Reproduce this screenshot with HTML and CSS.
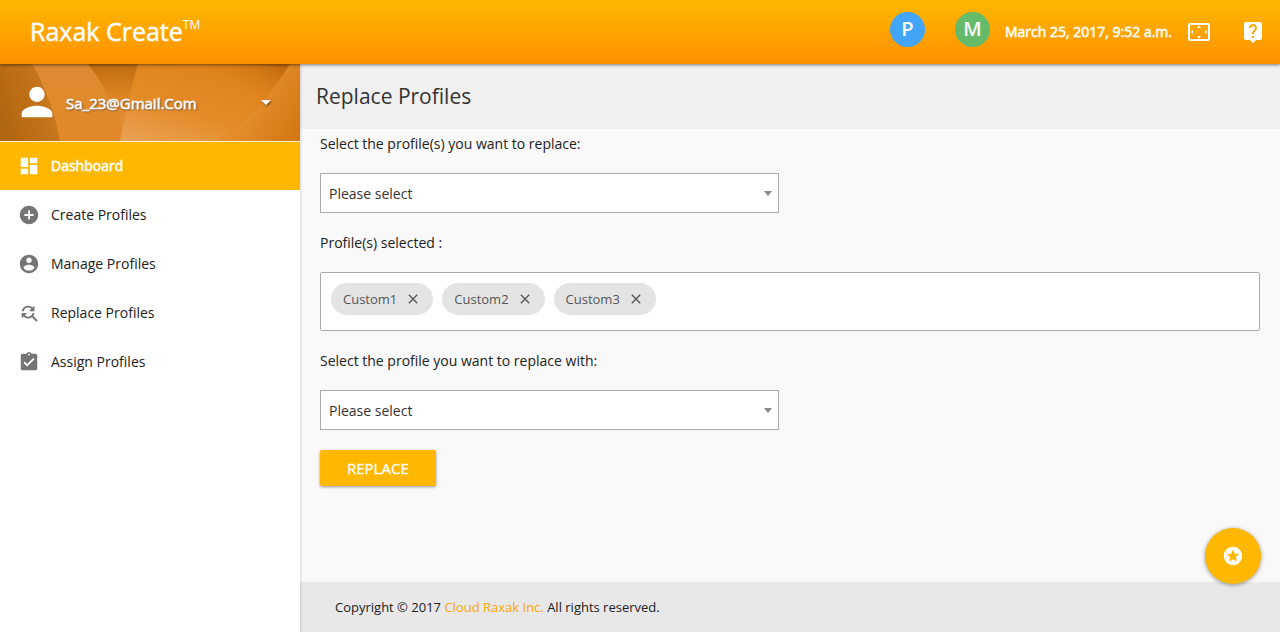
FILE: index.html
```html
<!DOCTYPE html>
<html lang="en">
<head>
<meta charset="utf-8">
<meta name="viewport" content="width=device-width, initial-scale=1">
<title>Raxak Create - Replace Profiles</title>
<link rel="stylesheet" href="styles.css">
</head>
<body>
<header class="topbar">
  <a class="brand" href="#">Raxak Create<sup class="brand-mark">TM</sup></a>
  <div class="topbar-tools">
    <button class="avatar avatar-blue" type="button">P</button>
    <button class="avatar avatar-green" type="button">M</button>
    <span class="clock">March 25, 2017, 9:52 a.m.</span>
    <button class="tool tool-screen" type="button" aria-label="Full screen">
      <svg class="icon-24" viewBox="0 0 24 24"><path d="M12.010 5.500L10 8h4l-1.990-2.500zM18 10v4l2.500-1.990L18 10zM6 10l-2.500 2.010L6 14v-4zm8 6h-4l2.010 2.500L14 16zm7-13H3c-1.100 0-2 .9-2 2v14c0 1.100.9 2 2 2h18c1.100 0 2-.9 2-2V5c0-1.100-.9-2-2-2zm0 16.010H3V4.990h18v14.020z"/></svg>
    </button>
    <button class="tool tool-help" type="button" aria-label="Help">
      <svg class="icon-24" viewBox="0 0 24 24"><path d="M19 2H5c-1.110 0-2 .9-2 2v14c0 1.100.89 2 2 2h4l3 3 3-3h4c1.100 0 2-.9 2-2V4c0-1.100-.9-2-2-2zm-6 16h-2v-2h2v2zm2.070-7.750l-.9.920C13.450 11.900 13 12.500 13 14h-2v-.5c0-1.100.45-2.100 1.170-2.830l1.240-1.260c.37-.36.59-.86.59-1.410 0-1.100-.9-2-2-2s-2 .9-2 2H8c0-2.210 1.790-4 4-4s4 1.790 4 4c0 .88-.36 1.680-.93 2.250z"/></svg>
    </button>
  </div>
</header>
<div class="shell">
  <aside class="sidebar">
    <button class="user" type="button">
      <svg class="user-art" viewBox="0 0 300 77" preserveAspectRatio="none" aria-hidden="true">
        <defs>
          <linearGradient id="base" gradientUnits="userSpaceOnUse" x1="0" y1="50" x2="64" y2="30"><stop offset="0" stop-color="#b0660f"/><stop offset="1" stop-color="#cf7c20"/></linearGradient>
          <linearGradient id="beam" x1="0" y1="0" x2="0" y2="1"><stop offset="0" stop-color="#dc8a34"/><stop offset=".5" stop-color="#e08a2b"/><stop offset="1" stop-color="#e2892a"/></linearGradient>
          <linearGradient id="dusk" x1="0" y1="0" x2="0" y2="1"><stop offset="0" stop-color="#bd6c12"/><stop offset=".4" stop-color="#dc8422"/><stop offset="1" stop-color="#e4923c"/></linearGradient>
          <linearGradient id="glow" x1="0" y1="1" x2=".7" y2="0"><stop offset="0" stop-color="#e9a355"/><stop offset=".45" stop-color="#e48b28"/><stop offset="1" stop-color="#dd8019"/></linearGradient>
          <linearGradient id="shade" gradientUnits="userSpaceOnUse" x1="282" y1="0" x2="258" y2="36"><stop offset="0" stop-color="#b9650d" stop-opacity=".9"/><stop offset="1" stop-color="#d97c18" stop-opacity="0"/></linearGradient>
          <linearGradient id="edge" gradientUnits="userSpaceOnUse" x1="255" y1="35" x2="300" y2="60"><stop offset="0" stop-color="#e58d2c"/><stop offset="1" stop-color="#d37814"/></linearGradient>
        </defs>
        <path fill="url(#base)" d="M0 0h300v77H0z"/>
        <path fill="url(#beam)" d="M32 0h56q26 32 40 77H60Q52 34 32 0z"/>
        <path fill="url(#dusk)" d="M88 0h50q-10 35-16 77h3Q112 30 88 0z"/>
        <path fill="url(#glow)" d="M138 0h152q-24 40-72 77h-98q7-38 18-77z"/>
        <path fill="url(#shade)" d="M200 0h90q-16 26-40 48z"/>
        <path fill="url(#edge)" d="M290 0h10v77h-82q48-36 72-77z"/>
      </svg>
      <svg class="user-icon" viewBox="0 0 24 24"><path d="M12 12c2.210 0 4-1.790 4-4s-1.790-4-4-4-4 1.790-4 4 1.790 4 4 4zm0 2c-2.670 0-8 1.340-8 4v2h16v-2c0-2.660-5.330-4-8-4z"/></svg>
      <span class="user-name">Sa_23@Gmail.Com</span>
      <svg class="user-caret" viewBox="0 0 24 24"><path d="M7 10l5 5 5-5z"/></svg>
    </button>
    <nav class="menu">
      <a class="menu-item menu-item-active" href="#"><svg class="menu-icon" viewBox="0 0 24 24"><path d="M3 13h8V3H3v10zm0 8h8v-6H3v6zm10 0h8V11h-8v10zm0-18v6h8V3h-8z"/></svg>Dashboard</a>
      <a class="menu-item" href="#"><svg class="menu-icon" viewBox="0 0 24 24"><path d="M12 2C6.480 2 2 6.480 2 12s4.480 10 10 10 10-4.480 10-10S17.520 2 12 2zm5 11h-4v4h-2v-4H7v-2h4V7h2v4h4v2z"/></svg>Create Profiles</a>
      <a class="menu-item" href="#"><svg class="menu-icon" viewBox="0 0 24 24"><path d="M12 2C6.480 2 2 6.480 2 12s4.480 10 10 10 10-4.480 10-10S17.520 2 12 2zm0 3c1.660 0 3 1.340 3 3s-1.340 3-3 3-3-1.340-3-3 1.340-3 3-3zm0 14.200c-2.500 0-4.710-1.280-6-3.220.03-1.990 4-3.080 6-3.080 1.990 0 5.970 1.090 6 3.080-1.290 1.940-3.500 3.220-6 3.220z"/></svg>Manage Profiles</a>
      <a class="menu-item" href="#"><svg class="menu-icon" viewBox="0 0 24 24"><path d="M11 6c1.380 0 2.630.56 3.540 1.460L12 10h6V4l-2.050 2.050C14.680 4.780 12.930 4 11 4c-3.530 0-6.430 2.610-6.920 6H6.100c.46-2.280 2.480-4 4.900-4zm5.640 9.140c.66-.9 1.120-1.970 1.280-3.140H15.900c-.46 2.280-2.480 4-4.900 4-1.380 0-2.630-.56-3.540-1.460L10 12H4v6l2.050-2.050C7.320 17.220 9.070 18 11 18c1.550 0 2.980-.51 4.140-1.360L20 21.490 21.490 20l-4.850-4.860z"/></svg>Replace Profiles</a>
      <a class="menu-item" href="#"><svg class="menu-icon" viewBox="0 0 24 24"><path d="M19 3h-4.180C14.400 1.840 13.300 1 12 1c-1.300 0-2.400.84-2.820 2H5c-1.100 0-2 .9-2 2v14c0 1.100.9 2 2 2h14c1.100 0 2-.9 2-2V5c0-1.100-.9-2-2-2zm-7 0c.55 0 1 .45 1 1s-.45 1-1 1-1-.45-1-1 .45-1 1-1zm-2 14l-4-4 1.410-1.410L10 14.170l6.590-6.590L18 9l-8 8z"/></svg>Assign Profiles</a>
    </nav>
  </aside>
  <div class="page">
    <div class="page-head"><h1 class="page-title">Replace Profiles</h1></div>
    <main class="content">
      <form class="form">
        <label class="label" for="from">Select the profile(s) you want to replace:</label>
        <div class="select-wrap"><select class="select" id="from"><option>Please select</option></select></div>
        <p class="label" id="chosen">Profile(s) selected :</p>
        <div class="chips" role="group" aria-labelledby="chosen">
          <span class="chip">Custom1<button class="chip-close" type="button" aria-label="Remove Custom1"><svg class="chip-icon" viewBox="0 0 24 24"><path d="M19 6.410L17.590 5 12 10.590 6.410 5 5 6.410 10.590 12 5 17.590 6.410 19 12 13.410 17.590 19 19 17.590 13.410 12z"/></svg></button></span>
          <span class="chip">Custom2<button class="chip-close" type="button" aria-label="Remove Custom2"><svg class="chip-icon" viewBox="0 0 24 24"><path d="M19 6.410L17.590 5 12 10.590 6.410 5 5 6.410 10.590 12 5 17.590 6.410 19 12 13.410 17.590 19 19 17.590 13.410 12z"/></svg></button></span>
          <span class="chip">Custom3<button class="chip-close" type="button" aria-label="Remove Custom3"><svg class="chip-icon" viewBox="0 0 24 24"><path d="M19 6.410L17.590 5 12 10.590 6.410 5 5 6.410 10.590 12 5 17.590 6.410 19 12 13.410 17.590 19 19 17.590 13.410 12z"/></svg></button></span>
        </div>
        <label class="label" for="to">Select the profile you want to replace with:</label>
        <div class="select-wrap"><select class="select" id="to"><option>Please select</option></select></div>
        <button class="submit" type="button">REPLACE</button>
      </form>
    </main>
    <footer class="footer">Copyright © 2017 <a class="footer-link" href="#">Cloud Raxak Inc.</a> All rights reserved.</footer>
  </div>
</div>
<button class="fab" type="button" aria-label="Favourites">
  <svg class="fab-icon" viewBox="0 0 24 24"><path d="M11.990 2C6.470 2 2 6.480 2 12s4.470 10 9.990 10C17.520 22 22 17.520 22 12S17.520 2 11.990 2zm4.240 16L12 15.450 7.770 18l1.120-4.810-3.730-3.230 4.920-.42L12 5l1.920 4.530 4.920.42-3.730 3.230L16.230 18z"/></svg>
</button>
</body>
</html>
```

FILE: styles.css
```css
* {
  box-sizing: border-box;
}

body {
  margin: 0;
  min-height: 100vh;
  display: flex;
  flex-direction: column;
  background: #f9f9f9;
  color: #212121;
  font: 14px/20px "Open Sans", sans-serif;
}

button {
  border: 0;
  padding: 0;
  background: none;
  color: inherit;
  font: inherit;
  cursor: pointer;
}

a {
  color: inherit;
  text-decoration: none;
}

svg {
  display: block;
  fill: currentColor;
}

.topbar {
  position: relative;
  z-index: 2;
  display: flex;
  align-items: center;
  justify-content: space-between;
  height: 64px;
  padding: 0 15px 0 30px;
  background: linear-gradient(#ffb700, #ff9100);
  box-shadow: 0 1px 3px rgba(0, 0, 0, 0.5);
  color: #fff;
}

.brand {
  padding-bottom: 2px;
  font-size: 25px;
  line-height: 32px;
  -webkit-text-stroke: 1px;
  -webkit-text-stroke-color: rgba(255, 255, 255, 0.5);
}

.brand-mark {
  font-size: 12px;
  line-height: 0;
  vertical-align: 12px;
  -webkit-text-stroke: 0;
}

.topbar-tools {
  display: flex;
  align-items: center;
}

.avatar {
  width: 35px;
  height: 35px;
  margin: 0 15px 5px;
  padding-bottom: 2px;
  border-radius: 50%;
  font-size: 20px;
  font-weight: 600;
}

.avatar-blue {
  background: #42a5f5;
}

.avatar-green {
  background: #66bb6a;
}

.clock {
  -webkit-text-stroke: 1px rgba(255, 255, 255, 0.6);
}

.tool {
  margin-left: 15px;
}

.tool-help {
  margin-left: 30px;
}

.icon-24 {
  width: 24px;
  height: 24px;
}

.shell {
  flex: 1;
  display: flex;
}

.sidebar {
  position: relative;
  z-index: 1;
  flex: 0 0 300px;
  background: #fff;
  box-shadow: 0 0 3px rgba(0, 0, 0, 0.25);
}

.user {
  position: relative;
  display: flex;
  align-items: center;
  width: 100%;
  height: 77px;
  padding: 0 22px 2px 14px;
  color: #fff;
}

.user-art {
  position: absolute;
  inset: 0;
  width: 100%;
  height: 100%;
}

.user-icon {
  position: relative;
  width: 46px;
  height: 46px;
}

.user-name {
  position: relative;
  flex: 1;
  margin-left: 6px;
  padding-top: 2px;
  font-size: 15px;
  text-align: left;
  text-shadow: 1px 1px 2px #444;
  -webkit-text-stroke: 1px rgba(255, 255, 255, 0.6);
}

.user-caret {
  position: relative;
  width: 24px;
  height: 24px;
  filter: drop-shadow(1px 1px 1px rgba(0, 0, 0, 0.5));
}

.menu-item {
  display: flex;
  align-items: center;
  gap: 11px;
  height: 49px;
  padding-left: 18px;
}

.menu-item-active {
  border-top: 1px solid #fff3d6;
  background: #ffb700;
  color: #fff;
  -webkit-text-stroke: 1px rgba(255, 255, 255, 0.6);
}

.menu-icon {
  width: 22px;
  height: 22px;
  color: #757575;
}

.menu-item-active .menu-icon {
  color: #fff;
}

.page {
  flex: 1;
  display: flex;
  flex-direction: column;
  min-width: 0;
}

.page-head {
  padding: 16px 16px 17px;
  background: #f0f0f0;
}

.page-title {
  margin: 0;
  color: #333;
  font-size: 21px;
  font-weight: 400;
  line-height: 32px;
}

.content {
  flex: 1;
  padding: 5px 20px 20px;
}

.form {
  display: flex;
  flex-direction: column;
}

.label {
  margin: 0 0 19px;
}

.select-wrap {
  position: relative;
  width: calc(50% - 11px);
  margin-bottom: 20px;
}

.select-wrap::after {
  content: "";
  position: absolute;
  top: 18px;
  right: 7px;
  border: 4px solid transparent;
  border-top: 5px solid #888;
  border-bottom: 0;
  pointer-events: none;
}

.select {
  display: block;
  appearance: none;
  width: 100%;
  height: 40px;
  padding: 2px 8px 0;
  border: 1px solid #aaa;
  border-radius: 0;
  background: #fff;
  color: #333;
  font: inherit;
}

.chips {
  display: flex;
  flex-wrap: wrap;
  gap: 9px;
  margin-bottom: 20px;
  padding: 10px 10px 15px;
  border: 1px solid #aaa;
  border-radius: 2px;
  background: #fff;
}

.chip {
  display: flex;
  align-items: center;
  gap: 8px;
  height: 32px;
  padding: 0 12px;
  border-radius: 16px;
  background: #e4e4e4;
  color: #555;
  font-size: 13px;
}

.chip-icon {
  width: 16px;
  height: 16px;
}

.submit {
  align-self: flex-start;
  height: 36px;
  padding: 0 27px;
  border-radius: 2px;
  background: #ffb700;
  box-shadow: 0 1px 3px rgba(0, 0, 0, 0.4);
  color: #fff;
  font-size: 15px;
  -webkit-text-stroke: 1px rgba(255, 255, 255, 0.4);
}

.footer {
  padding: 15px 35px;
  background: #e8e8e8;
  font-size: 13px;
}

.footer-link {
  color: #ffa500;
}

.fab {
  position: fixed;
  z-index: 3;
  right: 19px;
  bottom: 48px;
  display: grid;
  place-items: center;
  width: 56px;
  height: 56px;
  border-radius: 50%;
  background: #ffb700;
  box-shadow: 0 1px 4px rgba(0, 0, 0, 0.4);
  color: #fff;
}

.fab-icon {
  width: 22px;
  height: 22px;
}
```
